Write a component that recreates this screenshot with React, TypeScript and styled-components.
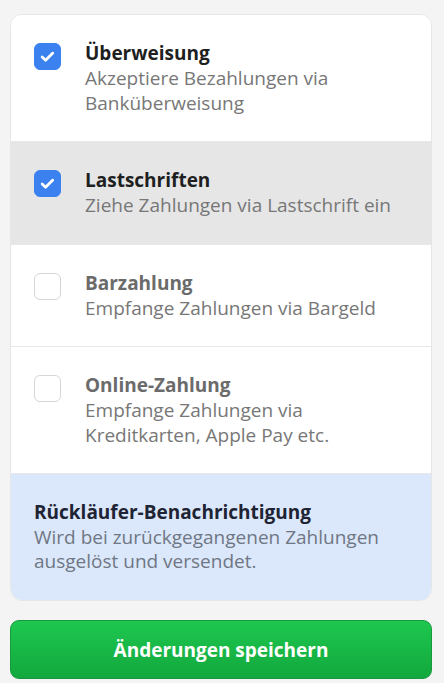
import React from "react";
import styled, { createGlobalStyle } from "styled-components";

const GlobalStyle = createGlobalStyle`
  html, body {
    margin: 0;
    padding: 0;
    background: #f4f4f4;
    font-family: "Open Sans", "Noto Sans", sans-serif;
  }
  * { box-sizing: border-box; }
`;

type Method = {
  title: string;
  text: string;
  checked: boolean;
  highlighted?: boolean;
};

const methods: Method[] = [
  {
    title: "Überweisung",
    text: "Akzeptiere Bezahlungen via Banküberweisung",
    checked: true,
  },
  {
    title: "Lastschriften",
    text: "Ziehe Zahlungen via Lastschrift ein",
    checked: true,
    highlighted: true,
  },
  {
    title: "Barzahlung",
    text: "Empfange Zahlungen via Bargeld",
    checked: false,
  },
  {
    title: "Online-Zahlung",
    text: "Empfange Zahlungen via Kreditkarten, Apple Pay etc.",
    checked: false,
  },
];

const Page = styled.div`
  padding: 14px 12px 6px 10px;
  display: flex;
  flex-direction: column;
  gap: 19px;
`;

const Card = styled.div`
  background: #fff;
  border: 1px solid #e6e6e6;
  border-radius: 12px;
  overflow: hidden;
`;

const Row = styled.label<{ $highlighted?: boolean }>`
  display: flex;
  align-items: flex-start;
  gap: 24px;
  padding: 26px 22px 26px 23px;
  background: ${(p) => (p.$highlighted ? "#e6e6e6" : "#fff")};
  border-bottom: 1px solid #e8e8e8;
  cursor: pointer;
`;

const Box = styled.span<{ $checked: boolean }>`
  flex: none;
  margin-top: 2px;
  width: 27px;
  height: 27px;
  border-radius: 6px;
  display: flex;
  align-items: center;
  justify-content: center;
  background: ${(p) => (p.$checked ? "#3b82f0" : "#fff")};
  border: 1px solid ${(p) => (p.$checked ? "#3b82f0" : "#d6d6d6")};
`;

const Texts = styled.div`
  display: flex;
  flex-direction: column;
`;

const Title = styled.div<{ $active: boolean }>`
  font-size: 19px;
  font-weight: 700;
  line-height: 25px;
  color: ${(p) => (p.$active ? "#1f1f1f" : "#6b6b6b")};
`;

const Desc = styled.div`
  font-size: 19px;
  line-height: 24.5px;
  color: #777;
`;

const Notice = styled.div`
  background: #dbe8fb;
  padding: 26px 22px 27px 23px;
`;

const NoticeTitle = styled.div`
  font-size: 19px;
  font-weight: 700;
  line-height: 25px;
  color: #1e2433;
`;

const NoticeText = styled.div`
  font-size: 19px;
  line-height: 24px;
  color: #6f7684;
`;

const SaveButton = styled.button`
  height: 59px;
  border-radius: 9px;
  border: 1px solid #169a3c;
  background: linear-gradient(180deg, #1ec74f 0%, #12a83d 100%);
  color: #fff;
  font-family: inherit;
  font-size: 19px;
  font-weight: 700;
  cursor: pointer;
`;

const Check = () => (
  <svg width="17" height="17" viewBox="0 0 16 16" fill="none">
    <path
      d="M3 8.5l3.2 3L13 4.8"
      stroke="#fff"
      strokeWidth="2.6"
      strokeLinecap="round"
      strokeLinejoin="round"
    />
  </svg>
);

export default function App() {
  return (
    <>
      <GlobalStyle />
      <Page>
        <Card>
          {methods.map((m) => (
            <Row key={m.title} $highlighted={m.highlighted}>
              <Box $checked={m.checked}>{m.checked && <Check />}</Box>
              <Texts>
                <Title $active={m.checked}>{m.title}</Title>
                <Desc>{m.text}</Desc>
              </Texts>
            </Row>
          ))}
          <Notice>
            <NoticeTitle>Rückläufer-Benachrichtigung</NoticeTitle>
            <NoticeText>
              Wird bei zurückgegangenen Zahlungen ausgelöst und versendet.
            </NoticeText>
          </Notice>
        </Card>
        <SaveButton>Änderungen speichern</SaveButton>
      </Page>
    </>
  );
}
